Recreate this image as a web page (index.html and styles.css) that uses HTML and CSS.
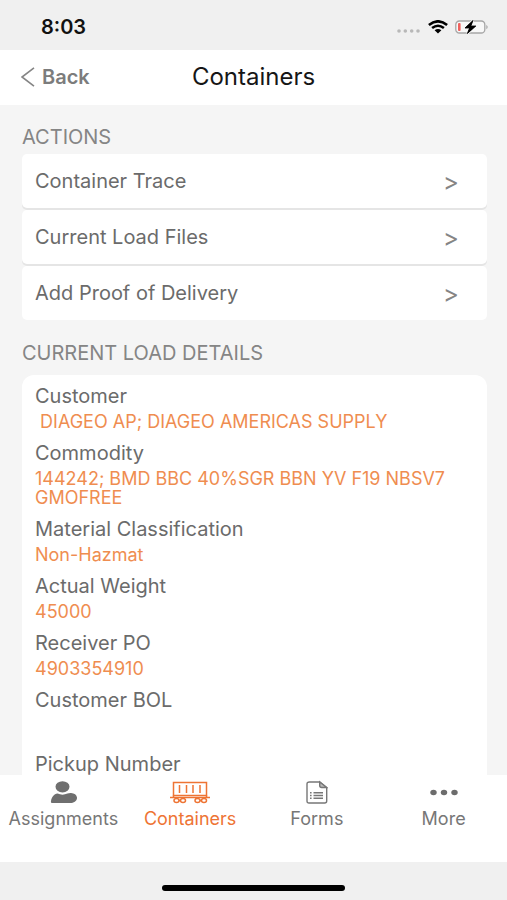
FILE: index.html
```html
<!DOCTYPE html>
<html lang="en">
<head>
<meta charset="utf-8">
<meta name="viewport" content="width=device-width, initial-scale=1">
<title>Containers</title>
<link rel="stylesheet" href="styles.css">
</head>
<body>
<div class="status">
  <span class="time">8:03</span>
  <div class="indicators">
    <svg width="24" height="6" viewBox="0 0 24 6" fill="#b8b8b8" aria-hidden="true"><circle cx="2" cy="3" r="1.800"/><circle cx="8.300" cy="3" r="1.800"/><circle cx="14.700" cy="3" r="1.800"/><circle cx="21" cy="3" r="1.800"/></svg>
    <svg width="20" height="14" viewBox="0 0 20 14" fill="none" stroke="#000" stroke-width="2.600" aria-hidden="true"><path d="M.9 4.900Q10-2.300 19.100 4.900"/><path d="M4.100 8.100Q10 3.400 15.900 8.100"/><path d="M6.600 10.200Q10 7.600 13.400 10.200L10 13.400Z" fill="#000" stroke="none"/></svg>
    <svg width="34" height="14" viewBox="0 0 34 14" aria-hidden="true"><rect x=".8" y="1" width="29" height="12" rx="3.600" fill="#f8f8f8" stroke="#a6a6a6" stroke-width="1.300"/><path d="M31.300 4.700q2.800 2.300 0 4.600z" fill="#a6a6a6"/><rect x="3" y="3" width="2.600" height="8" rx="1" fill="#f0605c"/><path d="M18 .5L10 8h4.600l-2.200 5.500L20.800 6h-5z" fill="#000" stroke="#f4f4f4" stroke-width="2.400" paint-order="stroke"/><path d="M18 .5L10 8h4.600l-2.200 5.500L20.800 6h-5z" stroke="#000" stroke-width=".8" stroke-linejoin="round"/></svg>
  </div>
</div>
<header class="header">
  <button class="back" type="button">
    <svg width="14" height="20" viewBox="0 0 14 20" fill="none" stroke="#858585" stroke-width="1.600" aria-hidden="true"><path d="M13 .8L1 10l12 9.200"/></svg>
    Back
  </button>
  <h1>Containers</h1>
</header>
<main class="content">
  <h2>ACTIONS</h2>
  <nav class="actions" aria-label="Actions">
    <a href="#trace">Container Trace <span class="chevron">&gt;</span></a>
    <a href="#files">Current Load Files <span class="chevron">&gt;</span></a>
    <a href="#proof">Add Proof of Delivery <span class="chevron">&gt;</span></a>
  </nav>
  <h2>CURRENT LOAD DETAILS</h2>
  <dl class="details">
    <dt>Customer</dt><dd>&nbsp;DIAGEO AP; DIAGEO AMERICAS SUPPLY</dd>
    <dt>Commodity</dt><dd>144242; BMD BBC 40%SGR BBN YV F19 NBSV7 GMOFREE</dd>
    <dt>Material Classification</dt><dd>Non-Hazmat</dd>
    <dt>Actual Weight</dt><dd>45000</dd>
    <dt>Receiver PO</dt><dd>4903354910</dd>
    <dt>Customer BOL</dt><dd></dd>
    <dt>Pickup Number</dt><dd></dd>
  </dl>
</main>
<nav class="tabs" aria-label="Main">
  <a href="#assignments">
    <svg width="28" height="24" viewBox="0 0 28 24" fill="#6f6f6f" aria-hidden="true"><ellipse cx="13.500" cy="6.800" rx="7" ry="5.600"/><path d="M3 23Q1.600 23 2 21C2.600 17 5 14.200 8.500 13.600q5 2.200 10 0Q20 12.900 22 13c3.800.2 6.300 2.400 6 5.300-.3 3.200-4 5.200-8 4.700z"/></svg>
    Assignments
  </a>
  <a href="#containers" class="active" aria-current="page">
    <svg width="42" height="24" viewBox="0 0 42 24" fill="none" stroke="#ee7434" stroke-width="1.500" aria-hidden="true"><rect x="4.500" y="2.500" width="33" height="13"/><path d="M10.500 5v8M17.500 5v8M24 5v8M31 5v8M1 17.500h40M4.500 15.500v2M37.500 15.500v2M7 17.500v3h8v-3M27 17.500v3h8v-3"/><g fill="#fff"><ellipse cx="7.500" cy="20.500" rx="2.500" ry="2"/><ellipse cx="14" cy="20.500" rx="2.500" ry="2"/><ellipse cx="28.500" cy="20.500" rx="2.500" ry="2"/><ellipse cx="35" cy="20.500" rx="2.500" ry="2"/></g></svg>
    Containers
  </a>
  <a href="#forms">
    <svg width="22" height="24" viewBox="0 0 22 24" fill="none" stroke="#777" stroke-width="1.400" aria-hidden="true"><path d="M3.500 2h10.200l7 5.500v13.500q0 2-2 2H3q-2 0-2-2v-17q0-2 2.500-2z"/><path d="M13.700 2v3.500q0 2 2 2h5z" fill="#bbb"/><path d="M7.500 12.700H17M7.500 15.500H17M7.500 18.300H17"/><path d="M4 12.700h1.600M4 15.500h1.600M4 18.300h1.600"/></svg>
    Forms
  </a>
  <a href="#more">
    <svg width="28" height="24" viewBox="0 0 28 24" fill="#6c6c6c" aria-hidden="true"><ellipse cx="3.500" cy="12.500" rx="3.200" ry="2.700"/><ellipse cx="14" cy="12.500" rx="3.200" ry="2.700"/><ellipse cx="24.500" cy="12.500" rx="3.200" ry="2.700"/></svg>
    More
  </a>
</nav>
<div class="home"><span class="home-bar"></span></div>
</body>
</html>
```
FILE: styles.css
```css
* { box-sizing: border-box; }
body {
  margin: 0;
  height: 100vh;
  display: flex;
  flex-direction: column;
  background: #f0f0f0;
  color: #6b6b6b;
  font-family: Inter, "Liberation Sans", sans-serif;
}
a { color: inherit; text-decoration: none; }
h1, h2, dl, dd { margin: 0; font-weight: 400; }
svg { display: block; flex: none; }
.status {
  flex: none;
  height: 50px;
  padding: 3px 18px 0 41px;
  display: flex;
  align-items: center;
  justify-content: space-between;
}
.time { color: #111; font-size: 20px; font-weight: 600; }
.indicators { display: flex; align-items: center; gap: 7px; }
.indicators svg:first-child { align-self: flex-end; }
.header {
  flex: none;
  height: 55px;
  padding: 0 21px 1px;
  background: #fff;
  display: grid;
  grid-template-columns: 1fr auto 1fr;
  align-items: center;
}
.back {
  justify-self: start;
  display: flex;
  align-items: center;
  gap: 7px;
  padding: 0;
  border: 0;
  background: none;
  color: #7c7c7c;
  font: 600 20px Inter, "Liberation Sans", sans-serif;
}
h1 { color: #161616; font-size: 24px; line-height: 28px; }
.content {
  flex: 1;
  min-height: 0;
  padding: 16px 20px 0 22px;
  overflow: auto;
  scrollbar-width: none;
  background: #f5f5f5;
}
h2 { padding: 4px 0; font-size: 20px; line-height: 25px; color: #858585; }
.actions {
  display: grid;
  gap: 2px;
  margin-bottom: 17px;
}
.actions a {
  height: 54px;
  padding: 0 28px 0 13px;
  display: flex;
  align-items: center;
  justify-content: space-between;
  border-radius: 5px;
  background: #fff;
  font-size: 20px;
}
.actions a:not(:last-child) { box-shadow: 0 2px 0 #e5e5e5; }
.chevron { font-size: 24px; color: #858585; }
.details {
  margin-top: 5px;
  padding: 10px 13px;
  border-radius: 12px;
  background: #fff;
}
dt { font-size: 20px; line-height: 22px; }
dd {
  min-height: 31px;
  margin-bottom: 11px;
  padding-top: 5px;
  font-size: 18px;
  line-height: 19px;
  color: #ef8d50;
}
dd:not(:empty) { min-height: 0; }
.tabs {
  flex: none;
  height: 87px;
  padding-top: 5px;
  display: grid;
  grid-template-columns: repeat(4, 1fr);
  background: #fff;
  color: #777;
}
.tabs a {
  display: flex;
  flex-direction: column;
  align-items: center;
  gap: 4px;
  font-size: 18px;
  line-height: 22px;
}
.tabs .active { color: #ee7434; }
.home { flex: none; height: 38px; padding-top: 23px; }
.home-bar { display: block; width: 36%; height: 6px; margin: 0 auto; border-radius: 3px; background: #000; }
```
